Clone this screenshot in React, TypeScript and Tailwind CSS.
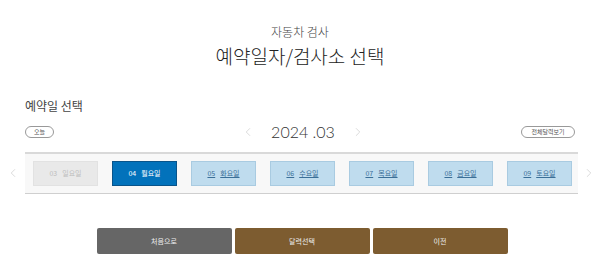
import { ChevronLeft, ChevronRight } from 'lucide-react';

const days = [
  { d: '03', w: '일요일', state: 'off' },
  { d: '04', w: '월요일', state: 'on' },
  { d: '05', w: '화요일', state: 'open' },
  { d: '06', w: '수요일', state: 'open' },
  { d: '07', w: '목요일', state: 'open' },
  { d: '08', w: '금요일', state: 'open' },
  { d: '09', w: '토요일', state: 'open' },
];

export default function App() {
  return (
    <div className="w-[600px] h-[274px] bg-white font-['Noto_Sans_CJK_KR','Noto_Sans',sans-serif] text-[#333] overflow-hidden">
      {/* Title */}
      <div className="pt-[25px] text-center">
        <p className="text-[12px] leading-[14px] font-light text-[#444]">자동차 검사</p>
        <h1 className="mt-[5px] text-[19px] leading-[24px] font-light text-[#222]">예약일자/검사소 선택</h1>
      </div>

      <div className="px-[25px]">
        <h2 className="mt-[30px] text-[12px] leading-[16px] text-[#444]">예약일 선택</h2>

        {/* Month bar */}
        <div className="mt-[10px] grid grid-cols-[1fr_auto_1fr] items-center h-[16px]">
          <div className="flex items-center">
            <button className="w-[29px] h-[12px] rounded-full border border-[#999] text-[6px] leading-[10px] text-[#555]">
              오늘
            </button>
          </div>
          <div className="flex items-center gap-[16px] ml-[6px]">
            <ChevronLeft className="w-[14px] h-[14px] text-[#ccc]" strokeWidth={1.2} />
            <span className="font-['Lato',sans-serif] font-light text-[16px] leading-[16px] text-[#333]">2024 .03</span>
            <ChevronRight className="w-[14px] h-[14px] text-[#ccc]" strokeWidth={1.2} />
          </div>
          <div className="flex items-center justify-end">
            <button className="w-[54px] h-[12px] rounded-full border border-[#999] text-[6px] leading-[10px] text-[#555]">
              전체달력보기
            </button>
          </div>
        </div>
      </div>

      {/* Day strip */}
      <div className="mt-[12px] flex items-center">
        <div className="w-[25px] flex justify-center">
          <ChevronLeft className="w-[14px] h-[14px] text-[#ccc]" strokeWidth={1.2} />
        </div>
        <div className="w-[553px] h-[42px] bg-[#f8f8f8] border-t-2 border-t-[#d9d9d9] border-b border-b-[#cfcfcf] flex items-center gap-[14px] pl-[8px]">
          {days.map((day) => (
            <div
              key={day.d}
              className={
                day.state === 'off'
                  ? 'w-[65px] h-[25px] bg-[#e9e9e9] border border-[#e2e2e2] text-[#bdbdbd] text-[7px] flex items-center justify-center gap-[5px]'
                  : day.state === 'on'
                  ? 'w-[65px] h-[25px] bg-[#0272bb] border border-[#09548a] text-white text-[7px] flex items-center justify-center gap-[5px]'
                  : 'w-[65px] h-[25px] bg-[#bfdcee] border border-[#a9cbe1] text-[#3a6f98] text-[7px] underline flex items-center justify-center gap-[5px]'
              }
            >
              <span>{day.d}</span>
              <span>{day.w}</span>
            </div>
          ))}
        </div>
        <div className="w-[22px] flex justify-center">
          <ChevronRight className="w-[14px] h-[14px] text-[#ccc]" strokeWidth={1.2} />
        </div>
      </div>

      {/* Buttons */}
      <div className="mt-[34px] flex justify-center gap-[3px] pl-[4px]">
        <button className="w-[135px] h-[26px] rounded-[2px] bg-[#666666] text-[7px] text-[#eee]">처음으로</button>
        <button className="w-[135px] h-[26px] rounded-[2px] bg-[#7d5c30] text-[7px] text-[#eee]">달력선택</button>
        <button className="w-[135px] h-[26px] rounded-[2px] bg-[#7d5c30] text-[7px] text-[#eee]">이전</button>
      </div>
    </div>
  );
}
